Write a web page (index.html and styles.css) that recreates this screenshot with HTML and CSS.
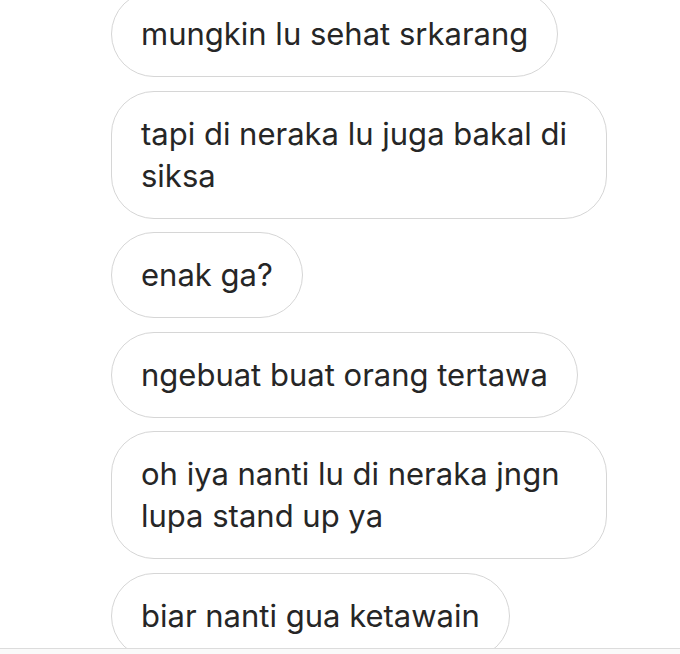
FILE: index.html
```html
<!DOCTYPE html>
<html lang="id">
<head>
<meta charset="utf-8">
<title>Chat</title>
<link rel="stylesheet" href="styles.css">
</head>
<body>
<div class="screen">
  <div class="thread">
    <div class="msg first">mungkin lu sehat srkarang</div>
    <div class="msg">tapi di neraka lu juga bakal di siksa</div>
    <div class="msg">enak ga?</div>
    <div class="msg">ngebuat buat orang tertawa</div>
    <div class="msg">oh iya nanti lu di neraka jngn lupa stand up ya</div>
    <div class="msg">biar nanti gua ketawain</div>
  </div>
  <div class="composer"></div>
</div>
</body>
</html>
```
FILE: styles.css
```css
html, body {
  margin: 0;
  padding: 0;
  background: #ffffff;
}
.screen {
  width: 680px;
  height: 654px;
  display: flex;
  flex-direction: column;
  overflow: hidden;
}
.thread {
  flex: 1;
  min-height: 0;
  overflow: hidden;
  display: flex;
  flex-direction: column;
  align-items: flex-start;
  gap: 13.5px;
  padding-left: 111px;
}
.msg {
  box-sizing: border-box;
  max-width: 496px;
  padding: 21px 29px;
  border: 1px solid #d6d6d6;
  border-radius: 43px;
  font-family: Inter, "Noto Sans", sans-serif;
  font-size: 31px;
  line-height: 42px;
  color: #262626;
  flex-shrink: 0;
}
.msg.first {
  margin-top: -9px;
}
.composer {
  height: 5px;
  flex-shrink: 0;
  border-top: 1px solid #dcdcdc;
  background: #fafafa;
}
```
